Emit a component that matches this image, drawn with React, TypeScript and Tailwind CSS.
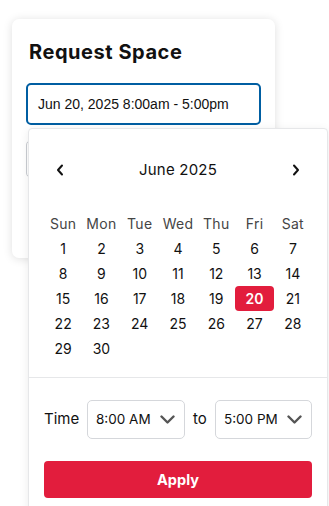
import { useState } from 'react';

const dayNames = ['Sun', 'Mon', 'Tue', 'Wed', 'Thu', 'Fri', 'Sat'];

// June 2025 starts on a Sunday
const days = Array.from({ length: 30 }, (_, i) => i + 1);

function Chevron({ dir }: { dir: 'left' | 'right' }) {
  return (
    <svg width="8" height="12" viewBox="0 0 8 12" fill="none" aria-hidden="true">
      <path
        d={dir === 'left' ? 'M6 1.5 L2 6 L6 10.5' : 'M2 1.5 L6 6 L2 10.5'}
        stroke="#111"
        strokeWidth="2"
        strokeLinecap="round"
        strokeLinejoin="round"
      />
    </svg>
  );
}

function TimeSelect({ value, width }: { value: string; width: string }) {
  return (
    <div
      className={`${width} shrink-0 h-[39px] flex items-center justify-between rounded-[5px] border border-[#d5d7db] bg-white pl-[8px] pr-[9px]`}
    >
      <span className="text-[13.5px] text-[#111]">{value}</span>
      <svg width="15" height="9" viewBox="0 0 15 9" fill="none" aria-hidden="true">
        <path d="M1.5 1.5 L7.5 7.5 L13.5 1.5" stroke="#555" strokeWidth="2.4" strokeLinecap="round" strokeLinejoin="round" />
      </svg>
    </div>
  );
}

export default function App() {
  const [selected, setSelected] = useState(20);

  return (
    <div className="min-h-[506px] w-[329px] overflow-hidden bg-white pt-[19px] pl-[12px] font-['Inter',sans-serif]">
      <div className="relative w-[263px] h-[239px] rounded-[7px] bg-white shadow-[0_1px_10px_rgba(0,0,0,0.13)] px-[14px] pt-[19px]">
        <h1 className="text-[20px] leading-[28px] font-bold tracking-[0.55px] text-[#111] pl-[3px]">Request Space</h1>
        <div className="mt-[17px] h-[42px] rounded-[5px] border-2 border-[#005ea2] flex items-center px-[10px] font-['Liberation_Sans',Arial,sans-serif] text-[14px] text-[#111]">
          Jun 20, 2025 8:00am - 5:00pm
        </div>
        <div className="mt-[15px] h-[38px] rounded-[5px] border border-[#c9ccd1]" />

        {/* date picker popover */}
        <div className="absolute left-[16px] top-[109px] w-[300px] bg-white border border-[#e6e7e9] rounded-[4px] shadow-[0_2px_10px_rgba(0,0,0,0.08)]">
          <div className="px-[15px] pt-[29px] pb-[16px]">
            <div className="flex items-center justify-between h-[24px]">
              <button className="w-[32px] h-[24px] flex items-center justify-center">
                <Chevron dir="left" />
              </button>
              <span className="text-[15px] tracking-[0.2px] text-[#111]">June 2025</span>
              <button className="w-[32px] h-[24px] flex items-center justify-center">
                <Chevron dir="right" />
              </button>
            </div>
            <div className="mt-[29px] grid grid-cols-7 w-[268px]">
              {dayNames.map((d) => (
                <div key={d} className="h-[25px] flex items-center justify-center text-[14px] tracking-[0.3px] text-[#454545]">
                  {d}
                </div>
              ))}
              {days.map((d) => (
                <button
                  key={d}
                  onClick={() => setSelected(d)}
                  className={`h-[25px] flex items-center justify-center rounded-[4px] text-[14px] ${
                    d === selected ? 'bg-[#e21d3d] text-white font-semibold' : 'text-[#111]'
                  }`}
                >
                  {d}
                </button>
              ))}
            </div>
          </div>
          <div className="border-t border-[#e6e7e9] px-[15px] pt-[22px] pb-[20px]">
            <div className="flex items-center w-[268px]">
              <span className="shrink-0 text-[15px] text-[#111] w-[43px]">Time</span>
              <TimeSelect value="8:00 AM" width="w-[98px]" />
              <span className="shrink-0 text-[15px] text-[#111] w-[30px] pl-[8px]">to</span>
              <TimeSelect value="5:00 PM" width="w-[97px]" />
            </div>
            <button className="mt-[22px] w-[268px] h-[37px] rounded-[4px] bg-[#e21d3d] text-white text-[14.5px] font-bold">
              Apply
            </button>
          </div>
        </div>
      </div>
    </div>
  );
}
